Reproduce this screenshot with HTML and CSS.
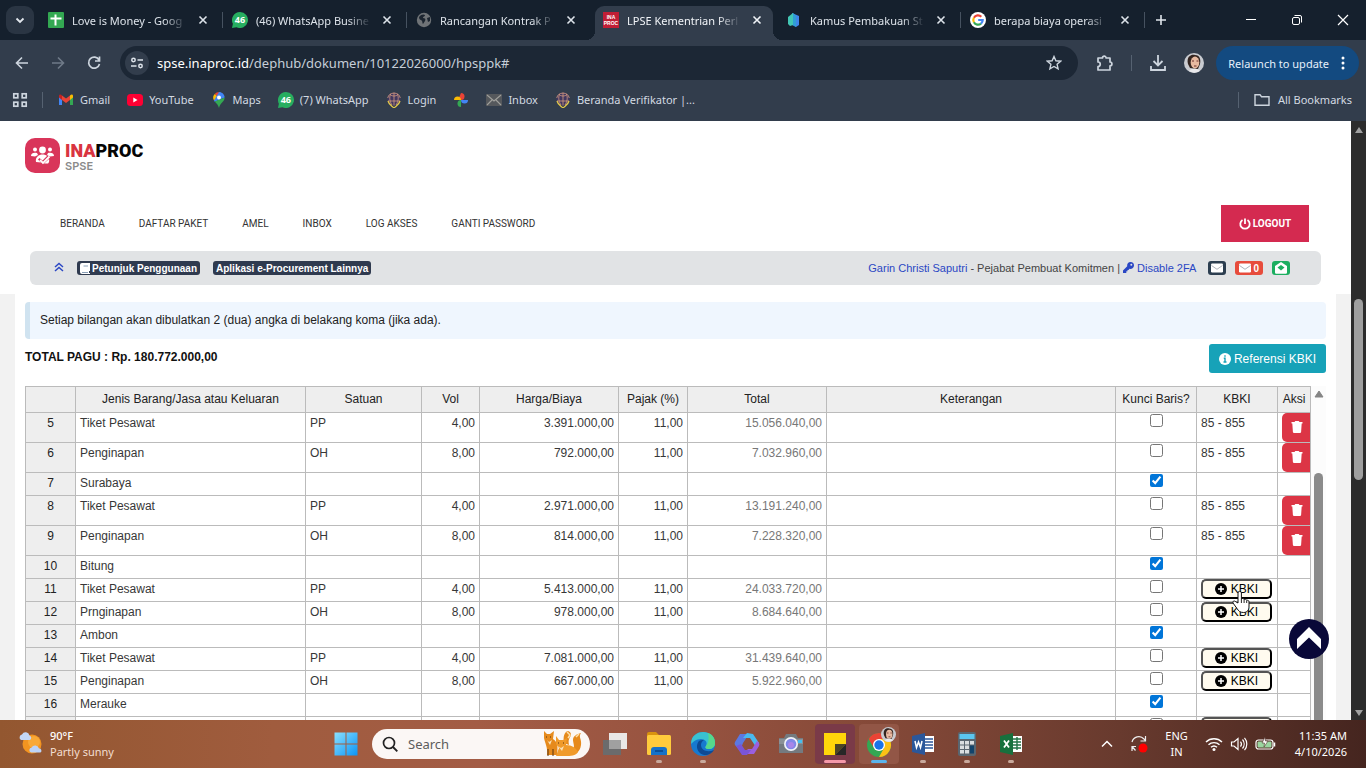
FILE: index.html
```html
<!DOCTYPE html>
<html lang="id">
<head>
<meta charset="utf-8">
<title>LPSE Kementrian Perhubungan</title>
<link rel="stylesheet" href="styles.css">
</head>
<body>
<svg class="sprite" aria-hidden="true">
  <symbol id="x" viewBox="0 0 16 16"><path d="M4.5 4.5l7 7M11.5 4.5l-7 7" stroke="currentColor" stroke-width="1.6" fill="none"/></symbol>
  <symbol id="wa" viewBox="0 0 16 16"><path d="M8 0a8 8 0 1 1-3.5 15.2L0 16l.9-4.2A8 8 0 0 1 8 0z" fill="#27ae60"/></symbol>
  <symbol id="trash" viewBox="0 0 12 14"><path d="M.5 2h3l.8-1h3.400l.8 1h3v1.500H.500zM1.300 3.300h9.400l-.6 8.600a1.200 1.200 0 0 1-1.200 1.100H3.100a1.200 1.200 0 0 1-1.200-1.100z" fill="#fff"/></symbol>
  <symbol id="plus" viewBox="0 0 12 12"><circle cx="6" cy="6" r="6" fill="#000"/><path d="M6 3v6M3 6h6" stroke="#fff" stroke-width="1.500"/></symbol>
  <symbol id="mail" viewBox="0 0 12 10"><rect y=".5" width="12" height="9" rx="1.200" fill="#fff"/><path d="M.5 2.500L6 6.300l5.500-3.800" stroke="#9aa0a8" stroke-width=".8" fill="none"/></symbol>
  <symbol id="emblem" viewBox="0 0 16 16"><circle cx="8" cy="7" r="6.600" fill="#413760"/><path d="M1.700 6a6.500 6.500 0 0 1 12.600 0M8 .6v13M2 9h12M4 2.500c2 2 6 2 8 0M4.500 2C3 6 4 10 6 13M11.500 2c1.500 4 .5 8-1.500 11" stroke="#d39a7f" stroke-width=".8" fill="none"/><path d="M2 9c1 4 4 5 6 7 2-2 5-3 6-7" stroke="#e3c94a" stroke-width="1.300" fill="none"/></symbol>
  <symbol id="face" viewBox="0 0 20 20"><circle cx="10" cy="10" r="10" fill="#c9cbd0"/><path d="M4 11C2 3 8 1 11 2c5 0 6 5 5 9l-2 5-8-1z" fill="#33241f"/><ellipse cx="11" cy="9.500" rx="4.300" ry="6" fill="#e7b9a0"/><path d="M8 8h2M12.500 8h2M10 13h2.500" stroke="#6b2f2a" stroke-width="1"/><path d="M5 18c2-3 9-3 11 0a10 10 0 0 1-11 0z" fill="#e9e9ec"/></symbol>
</svg>

<header class="browser">
  <div class="tabstrip">
    <button class="tab-search" aria-label="Cari tab"><svg width="12" height="12" viewBox="0 0 12 12"><path d="M2.500 4.500L6 8l3.500-3.500" stroke="#e3e8ee" stroke-width="1.800" fill="none"/></svg></button>
    <div class="tab">
      <svg class="fav" viewBox="0 0 16 16"><rect width="16" height="16" rx="1" fill="#33a852"/><path d="M7.500 2.500v11M2.500 6.500h11" stroke="#fff" stroke-width="2"/></svg>
      <span class="tab-title">Love is Money - Goog</span><button class="close" aria-label="Tutup"><svg><use href="#x"/></svg></button>
    </div>
    <div class="tab split">
      <span class="wa-icon"><svg class="fav"><use href="#wa"/></svg><b>46</b></span>
      <span class="tab-title">(46) WhatsApp Busine</span><button class="close" aria-label="Tutup"><svg><use href="#x"/></svg></button>
    </div>
    <div class="tab split">
      <svg class="fav" viewBox="0 0 16 16"><circle cx="8" cy="8" r="7.200" fill="#6f7377"/><path d="M3 5c2-3 5-3 6-2 0 2-2 1-2 3 2 0 3 1 2 3l-2 3c-1-1 0-3-2-4-1 0-2-1-2-3zM11 6l3-1v4l-2 1z" fill="#1c2530"/></svg>
      <span class="tab-title">Rancangan Kontrak P</span><button class="close" aria-label="Tutup"><svg><use href="#x"/></svg></button>
    </div>
    <div class="tab active">
      <span class="ina-icon">INA<br>PROC</span>
      <span class="tab-title">LPSE Kementrian Perl</span><button class="close" aria-label="Tutup"><svg><use href="#x"/></svg></button>
    </div>
    <div class="tab">
      <svg class="fav" viewBox="0 0 16 16"><path d="M6 1l7 3v9l-3 2-4-2z" fill="#3f86e8"/><path d="M2 5l5-4v12l-3 1-2-2z" fill="#42c6b4"/><path d="M7 1v12l3 2V4z" fill="#2f9fd4"/></svg>
      <span class="tab-title">Kamus Pembakuan St</span><button class="close" aria-label="Tutup"><svg><use href="#x"/></svg></button>
    </div>
    <div class="tab split">
      <svg class="fav" viewBox="0 0 16 16"><circle cx="8" cy="8" r="8" fill="#fff"/><g fill="none" stroke-width="2.200"><path d="M11.300 4.700A4.700 4.700 0 0 0 3.900 5.700" stroke="#ea4335"/><path d="M3.900 5.700a4.700 4.700 0 0 0 0 4.600" stroke="#fbbc05"/><path d="M3.900 10.300a4.700 4.700 0 0 0 7.100 1.300" stroke="#34a853"/><path d="M11 11.600A4.700 4.700 0 0 0 12.700 8H8.200" stroke="#4285f4"/></g></svg>
      <span class="tab-title">berapa biaya operasi</span><button class="close" aria-label="Tutup"><svg><use href="#x"/></svg></button>
    </div>
    <button class="new-tab split" aria-label="Tab baru"><svg width="12" height="12" viewBox="0 0 12 12"><path d="M6 1v10M1 6h10" stroke="#dfe5ec" stroke-width="1.600"/></svg></button>
    <div class="window-buttons">
      <button aria-label="Minimalkan"><svg width="12" height="12" viewBox="0 0 12 12"><path d="M1 5.500h10" stroke="#fff"/></svg></button>
      <button aria-label="Pulihkan"><svg width="12" height="12" viewBox="0 0 12 12"><rect x="1.500" y="3.500" width="7" height="7" rx="1.500" stroke="#fff" fill="none"/><path d="M3.500 1.500H9A1.500 1.500 0 0 1 10.500 3v5.500" stroke="#fff" fill="none"/></svg></button>
      <button aria-label="Tutup jendela"><svg width="12" height="12" viewBox="0 0 12 12"><path d="M1 1l10 10M11 1L1 11" stroke="#fff" stroke-width="1.200"/></svg></button>
    </div>
  </div>
  <div class="toolbar">
    <button class="nav-btn" aria-label="Kembali"><svg width="16" height="16" viewBox="0 0 16 16"><path d="M14 8H3M8 2.500L2.500 8 8 13.500" stroke="#cdd5de" stroke-width="1.600" fill="none"/></svg></button>
    <button class="nav-btn" aria-label="Maju"><svg width="16" height="16" viewBox="0 0 16 16"><path d="M2 8h11M8 2.500L13.500 8 8 13.500" stroke="#6f7a88" stroke-width="1.600" fill="none"/></svg></button>
    <button class="nav-btn" aria-label="Muat ulang"><svg width="16" height="16" viewBox="0 0 16 16"><path d="M13 5a5.500 5.500 0 1 0 .5 4M13.500 1.500V6H9" stroke="#cdd5de" stroke-width="1.700" fill="none"/></svg></button>
    <div class="omnibox">
      <button class="site-info" aria-label="Info situs"><svg width="14" height="14" viewBox="0 0 14 14"><g stroke="#dde3ea" stroke-width="1.500" fill="none"><circle cx="3.500" cy="4" r="1.700"/><path d="M7.500 4H13M1 10h5.500"/><circle cx="10.500" cy="10" r="1.700"/></g></svg></button>
      <span class="url"><b>spse.inaproc.id</b>/dephub/dokumen/10122026000/hpsppk#</span>
      <button class="nav-btn" aria-label="Bookmark"><svg width="16" height="16" viewBox="0 0 16 16"><path d="M8 1.500l1.900 4.300 4.700.4-3.500 3.100 1 4.600L8 11.500l-4.100 2.400 1-4.600L1.400 6.200l4.700-.4z" stroke="#cdd5de" stroke-width="1.400" fill="none"/></svg></button>
    </div>
    <button class="nav-btn ext" aria-label="Ekstensi"><svg width="18" height="18" viewBox="0 0 18 18"><path d="M2 4h4.500a1.800 1.800 0 0 1 3.600 0H14v4a1.900 1.900 0 0 1 0 3.800V16H2v-3.500c3 0 3-4.500 0-4.500z" stroke="#cdd5de" stroke-width="1.700" stroke-linejoin="round" fill="none"/></svg></button>
    <span class="bar"></span>
    <button class="nav-btn" aria-label="Unduhan"><svg width="18" height="18" viewBox="0 0 18 18"><path d="M9 1v10M4.500 7L9 11.500 13.500 7M2 12v4h14v-4" stroke="#cdd5de" stroke-width="1.800" fill="none"/></svg></button>
    <button class="nav-btn avatar" aria-label="Profil"><svg width="20" height="20"><use href="#face"/></svg></button>
    <button class="relaunch">Relaunch to update<svg width="4" height="16" viewBox="0 0 4 16"><g fill="#fff"><circle cx="2" cy="3" r="1.500"/><circle cx="2" cy="8" r="1.500"/><circle cx="2" cy="13" r="1.500"/></g></svg></button>
  </div>
  <nav class="bookmarks">
    <button class="apps" aria-label="Aplikasi"><svg width="16" height="16" viewBox="0 0 16 16"><g stroke="#cdd5de" stroke-width="1.700" fill="none"><rect x="1.800" y="1.800" width="4" height="4"/><rect x="10.200" y="1.800" width="4" height="4"/><rect x="1.800" y="10.200" width="4" height="4"/><rect x="10.200" y="10.200" width="4" height="4"/></g></svg></button>
    <span class="bar"></span>
    <a href="#"><svg class="fav" viewBox="0 0 16 16"><path d="M1 4v9h3V7z" fill="#4285f4"/><path d="M12 7v6h3V4z" fill="#34a853"/><path d="M4 3.500V8l4 3 4-3V3.500L8 6.500z" fill="#ea4335"/><path d="M1 4c0-1.500 1.600-2 3-.5V8L1 5.500z" fill="#c5221f"/><path d="M15 4c0-1.500-1.600-2-3-.5V8l3-2.500z" fill="#fbbc04"/></svg>Gmail</a>
    <a href="#"><svg class="fav" viewBox="0 0 16 16"><rect y="2" width="16" height="12" rx="3.500" fill="#f03"/><path d="M6.300 5.500v5l4.200-2.500z" fill="#fff"/></svg>YouTube</a>
    <a href="#" class="maps"><svg class="fav" viewBox="0 0 16 16"><path d="M8 0a5.600 5.600 0 0 0-4.300 2L7 5z" fill="#ea4335"/><path d="M3.700 2A5.500 5.500 0 0 0 3 8.500L7 5z" fill="#fbbc04"/><path d="M8 0c3 0 5.600 2.400 5.600 5.600L3.700 9.700 3 8.500z" fill="#4285f4"/><path d="M13.600 5.600C13.600 10 9.500 10.500 8 16c-.8-3-2.500-4.600-4.300-6.500z" fill="#34a853"/><circle cx="8" cy="5.500" r="2" fill="#fff"/></svg>Maps</a>
    <a href="#"><span class="wa-icon"><svg class="fav"><use href="#wa"/></svg><b>46</b></span>(7) WhatsApp</a>
    <a href="#"><svg class="fav"><use href="#emblem"/></svg>Login</a>
    <a href="#" aria-label="Foto"><svg class="fav" viewBox="0 0 16 16"><path d="M8 1a3.500 3.500 0 0 1 0 7z" fill="#ea4335"/><path d="M8 1v7H5z" fill="#ea4335"/><path d="M15 8a3.500 3.500 0 0 1-7 0z" fill="#4285f4"/><path d="M8 15a3.500 3.500 0 0 1 0-7z" fill="#34a853"/><path d="M1 8a3.500 3.500 0 0 1 7 0z" fill="#fbbc04"/></svg></a>
    <a href="#"><svg class="fav" viewBox="0 0 16 16"><rect y="2" width="16" height="12" fill="#55585c"/><path d="M1 3l7 6 7-6M1 13l5-5M15 13l-5-5" stroke="#a0a09c" stroke-width="1.100" fill="none"/></svg>Inbox</a>
    <a href="#"><svg class="fav"><use href="#emblem"/></svg>Beranda Verifikator |...</a>
    <span class="bar push"></span>
    <a href="#" class="all"><svg class="fav" viewBox="0 0 16 16"><path d="M1 2.700h5l1.500 2H15v8.600H1z" stroke="#cdd5de" stroke-width="1.400" fill="none"/></svg>All Bookmarks</a>
  </nav>
</header>

<div class="viewport">
  <main class="page">
    <div class="masthead">
      <a href="#" class="logo">
        <svg width="35" height="35" viewBox="0 0 35 35"><rect width="35" height="35" rx="10" fill="#d9355a"/><g fill="#fff"><circle cx="17.500" cy="12" r="3.400"/><circle cx="10" cy="11.500" r="2"/><circle cx="25" cy="11.500" r="2"/><path d="M6 18c0-3 3-3.800 6-3l1 2-3 1.500zM29 18c0-3-3-3.800-6-3l-1 2 3 1.500z"/><path d="M11 24c-1-5 3-7.500 6.500-7.500 2 0 3.500.5 4.500 1.500l-4.500 4.500-3-2.500-1.500 1.500 3 3z"/><path d="M15 22l3 3 6.500-6.500" stroke="#fff" stroke-width="1.800" fill="none"/><path d="M24 21c.5 2 0 4-1 4.500h-4z"/></g></svg>
        <span class="brand"><span class="name"><i>INA</i>PROC</span><span class="sub">SPSE</span></span>
      </a>
      <div class="menu-row">
        <nav class="menu"><a href="#">BERANDA</a><a href="#">DAFTAR PAKET</a><a href="#">AMEL</a><a href="#">INBOX</a><a href="#">LOG AKSES</a><a href="#">GANTI PASSWORD</a></nav>
        <button class="logout"><svg width="12" height="12" viewBox="0 0 12 12"><path d="M6 .5v5.500M3.500 2a4.700 4.700 0 1 0 5 0" stroke="#fff" stroke-width="1.800" fill="none"/></svg>LOGOUT</button>
      </div>
      <div class="infobar">
        <a href="#" class="chev" aria-label="Ciutkan"><svg width="10" height="10" viewBox="0 0 10 10"><path d="M1 5l4-3.500L9 5M1 9l4-3.500L9 9" stroke="#2b47c4" stroke-width="1.500" fill="none"/></svg></a>
        <a href="#" class="badge"><svg width="10" height="11" viewBox="0 0 10 11"><path d="M2 0h8v8H9v2h1v1H2a2 2 0 0 1-2-2V2a2 2 0 0 1 2-2z" fill="#fff"/><path d="M3.500 3h4.500M2 9.500h6" stroke="#8aa0b8" stroke-width="1"/></svg>Petunjuk Penggunaan</a>
        <a href="#" class="badge second">Aplikasi e-Procurement Lainnya</a>
        <span class="user"><a href="#">Garin Christi Saputri</a> - Pejabat Pembuat Komitmen | <a href="#"><svg width="11" height="11" viewBox="0 0 11 11"><path d="M7.500 0A3.500 3.500 0 0 1 11 3.500 3.500 3.500 0 0 1 6.500 6.800L5.500 8H4.500v1.200H3.300V11H0V8.500l4.200-4.200A3.500 3.500 0 0 1 7.500 0z" fill="#2b47c4"/><circle cx="8.300" cy="2.700" r="1" fill="#e1e3e5"/></svg> Disable 2FA</a></span>
        <a href="#" class="chip dark" aria-label="Pesan"><svg width="12" height="10"><use href="#mail"/></svg></a>
        <a href="#" class="chip red"><svg width="12" height="10"><use href="#mail"/></svg>0</a>
        <a href="#" class="chip green" aria-label="Pesan terbuka"><svg width="12" height="12" viewBox="0 0 12 12"><path d="M6 0l6 4v6.500a1.200 1.200 0 0 1-1.200 1.200H1.200A1.200 1.200 0 0 1 0 10.500V4z" fill="#fff"/><path d="M6 3l3.500 2.500L6 8.500 2.500 5.500z" fill="#1cae60"/></svg></a>
      </div>
    </div>
    <div class="body">
      <section class="card">
        <p class="note">Setiap bilangan akan dibulatkan 2 (dua) angka di belakang koma (jika ada).</p>
        <div class="total-row">
          <strong>TOTAL PAGU : Rp. 180.772.000,00</strong>
          <button class="ref"><svg width="12" height="12" viewBox="0 0 12 12"><circle cx="6" cy="6" r="6" fill="#fff"/><path d="M6 2.200v1.600M4.800 5.300H6v3.500M4.500 9h3" stroke="#17a2b8" stroke-width="1.400" fill="none"/></svg>Referensi KBKI</button>
        </div>
        <div class="sheet">
          <div class="grid-wrap">
          <table>
            <colgroup><col class="c-no"><col class="c-name"><col class="c-unit"><col class="c-vol"><col class="c-price"><col class="c-tax"><col class="c-total"><col class="c-note"><col class="c-lock"><col class="c-kbki"><col class="c-act"></colgroup>
            <thead><tr><th></th><th>Jenis Barang/Jasa atau Keluaran</th><th>Satuan</th><th>Vol</th><th>Harga/Biaya</th><th>Pajak (%)</th><th>Total</th><th>Keterangan</th><th>Kunci Baris?</th><th>KBKI</th><th>Aksi</th></tr></thead>
            <tbody>
            <tr class="tall"><th>5</th><td>Tiket Pesawat</td><td>PP</td><td class="n">4,00</td><td class="n">3.391.000,00</td><td class="n">11,00</td><td class="n t">15.056.040,00</td><td></td><td class="k"><input type="checkbox" aria-label="Kunci baris 5"></td><td>85 - 855</td><td><button class="del" aria-label="Hapus baris 5"><svg><use href="#trash"/></svg></button></td></tr>
            <tr class="tall"><th>6</th><td>Penginapan</td><td>OH</td><td class="n">8,00</td><td class="n">792.000,00</td><td class="n">11,00</td><td class="n t">7.032.960,00</td><td></td><td class="k"><input type="checkbox" aria-label="Kunci baris 6"></td><td>85 - 855</td><td><button class="del" aria-label="Hapus baris 6"><svg><use href="#trash"/></svg></button></td></tr>
            <tr><th>7</th><td>Surabaya</td><td></td><td></td><td></td><td></td><td></td><td></td><td class="k"><input type="checkbox" checked aria-label="Kunci baris 7"></td><td></td><td></td></tr>
            <tr class="tall"><th>8</th><td>Tiket Pesawat</td><td>PP</td><td class="n">4,00</td><td class="n">2.971.000,00</td><td class="n">11,00</td><td class="n t">13.191.240,00</td><td></td><td class="k"><input type="checkbox" aria-label="Kunci baris 8"></td><td>85 - 855</td><td><button class="del" aria-label="Hapus baris 8"><svg><use href="#trash"/></svg></button></td></tr>
            <tr class="tall"><th>9</th><td>Penginapan</td><td>OH</td><td class="n">8,00</td><td class="n">814.000,00</td><td class="n">11,00</td><td class="n t">7.228.320,00</td><td></td><td class="k"><input type="checkbox" aria-label="Kunci baris 9"></td><td>85 - 855</td><td><button class="del" aria-label="Hapus baris 9"><svg><use href="#trash"/></svg></button></td></tr>
            <tr><th>10</th><td>Bitung</td><td></td><td></td><td></td><td></td><td></td><td></td><td class="k"><input type="checkbox" checked aria-label="Kunci baris 10"></td><td></td><td></td></tr>
            <tr><th>11</th><td>Tiket Pesawat</td><td>PP</td><td class="n">4,00</td><td class="n">5.413.000,00</td><td class="n">11,00</td><td class="n t">24.033.720,00</td><td></td><td class="k"><input type="checkbox" aria-label="Kunci baris 11"></td><td><button class="kbki"><svg><use href="#plus"/></svg>KBKI</button></td><td></td></tr>
            <tr><th>12</th><td>Prnginapan</td><td>OH</td><td class="n">8,00</td><td class="n">978.000,00</td><td class="n">11,00</td><td class="n t">8.684.640,00</td><td></td><td class="k"><input type="checkbox" aria-label="Kunci baris 12"></td><td><button class="kbki"><svg><use href="#plus"/></svg>KBKI</button></td><td></td></tr>
            <tr><th>13</th><td>Ambon</td><td></td><td></td><td></td><td></td><td></td><td></td><td class="k"><input type="checkbox" checked aria-label="Kunci baris 13"></td><td></td><td></td></tr>
            <tr><th>14</th><td>Tiket Pesawat</td><td>PP</td><td class="n">4,00</td><td class="n">7.081.000,00</td><td class="n">11,00</td><td class="n t">31.439.640,00</td><td></td><td class="k"><input type="checkbox" aria-label="Kunci baris 14"></td><td><button class="kbki"><svg><use href="#plus"/></svg>KBKI</button></td><td></td></tr>
            <tr><th>15</th><td>Penginapan</td><td>OH</td><td class="n">8,00</td><td class="n">667.000,00</td><td class="n">11,00</td><td class="n t">5.922.960,00</td><td></td><td class="k"><input type="checkbox" aria-label="Kunci baris 15"></td><td><button class="kbki"><svg><use href="#plus"/></svg>KBKI</button></td><td></td></tr>
            <tr><th>16</th><td>Merauke</td><td></td><td></td><td></td><td></td><td></td><td></td><td class="k"><input type="checkbox" checked aria-label="Kunci baris 16"></td><td></td><td></td></tr>
            <tr><th></th><td></td><td></td><td></td><td></td><td></td><td></td><td></td><td class="k"><input type="checkbox" aria-label="Kunci baris"></td><td><button class="kbki" aria-label="Tambah"></button></td><td></td></tr>
            </tbody>
          </table>
          </div>
          <div class="inner-scroll"><svg width="10" height="8" viewBox="0 0 10 8"><path d="M5 1l4 6H1z" fill="#858585" stroke="#858585" stroke-linejoin="round"/></svg><span class="inner-thumb"></span></div>
        </div>
      </section>
    </div>
    <button class="to-top" aria-label="Ke atas"><svg width="40" height="40" viewBox="0 0 40 40"><path d="M20 8l12 12v10L20 18.500 8 30V20z" fill="#fff"/></svg></button>
    <svg class="cursor" width="20" height="24" viewBox="0 0 20 24"><path d="M7 13V3a1.700 1.700 0 0 1 3.400 0v6c.6-1 2.600-.6 2.700.6.800-.8 2.500-.3 2.600.9.800-.6 2.300-.1 2.300 1.300V16c0 4-1.500 6.500-5.500 6.500-3.500 0-5-1.500-6.500-4L2 13c-.8-1.500 1-2.700 2.200-1.600z" fill="#fff" stroke="#111" stroke-width="1"/><path d="M10.400 9v4M13.100 10v3M15.700 11v2" stroke="#111" stroke-width=".9"/></svg>
  </main>
  <div class="outer-scroll">
    <svg width="10" height="8" viewBox="0 0 10 8"><path d="M5 1l4 6H1z" fill="#a0a0a0"/></svg>
    <span class="outer-thumb"></span>
    <svg width="10" height="8" viewBox="0 0 10 8"><path d="M5 7l4-6H1z" fill="#a0a0a0"/></svg>
  </div>
</div>

<footer class="taskbar">
  <div class="weather">
    <svg width="26" height="26" viewBox="0 0 26 26"><circle cx="14" cy="13" r="9.500" fill="#f39420"/><circle cx="16" cy="11" r="6" fill="#f9a938"/><path d="M3 9a3 3 0 0 1 1-5.500 4 4 0 0 1 7.500 1A2.500 2.500 0 0 1 12 9z" fill="#c3d8f7"/><path d="M13 21.500a2.600 2.600 0 0 1 .6-5 4 4 0 0 1 7.400 1 2.200 2.200 0 0 1 1.500 4z" fill="#bcd3f8"/></svg>
    <span><b>90°F</b><br>Partly sunny</span>
  </div>
  <div class="dock">
    <button class="app" aria-label="Start"><svg width="24" height="24" viewBox="0 0 24 24"><defs><linearGradient id="w" x2="1" y2="1"><stop stop-color="#8be0ff"/><stop offset="1" stop-color="#0a94f5"/></linearGradient></defs><path d="M.5.500h11v11H.500zM12.500.500h11v11h-11zM.500 12.500h11v11H.500zM12.500 12.500h11v11h-11z" fill="url(#w)"/></svg></button>
    <label class="search"><svg width="16" height="16" viewBox="0 0 16 16"><circle cx="7" cy="7" r="5.500" stroke="#222" stroke-width="1.700" fill="none"/><path d="M11 11l4.300 4.300" stroke="#222" stroke-width="1.900"/></svg><input type="text" placeholder="Search" aria-label="Search">
      <svg width="42" height="28" viewBox="0 0 42 28"><g fill="#e68a1c"><path d="M2 1l3 3h3l4-3-1 8c5 3 5 8 4 16H5C6 18 3 13 2 8z"/><path d="M22 13c-1-6 0-11 4-12 3 1 4 4 2 6-1 2-2 4-1 8z"/><path d="M27 22c8-1 4-9 4-12 0-4 4-6 8-7-3 4 1 6 0 12-1 7-5 10-14 10z"/></g><path d="M14 6l3 4h4l4-2-1 7c6 0 10 3 12 7-2 4-8 4-12 4H14l3-8-3-4z" fill="#f09a2a"/><path d="M5 10l2 2 3-2-2 5zM16 16l3 2 3-2-2 5z" fill="#fbe0b4"/><path d="M4 7h1M8 7h1M16 13h1M21 13h1M6 19v7M11 19v7" stroke="#59320f" stroke-width="1"/><path d="M25 2l3 3-2 3M34 7l3-3" stroke="#ffe1aa" stroke-width="1.500" fill="none"/></svg></label>
    <button class="app" aria-label="Task view"><svg width="26" height="26" viewBox="0 0 26 26"><rect x="7" y="2" width="18" height="16" fill="#e9e7e6"/><rect x="1" y="9" width="18" height="15" fill="#6b6b6c"/><rect x="7" y="9" width="12" height="9" fill="#a0a0a0"/></svg></button>
    <button class="app run" aria-label="File Explorer"><svg width="26" height="26" viewBox="0 0 26 26"><path d="M1 3a2 2 0 0 1 2-2h7l3 3h-2v5H1z" fill="#d9920e"/><rect x="1" y="4" width="24" height="20" rx="1.500" fill="#ffcb3c"/><path d="M5 24v-5a3 3 0 0 1 3-3h10a3 3 0 0 1 3 3v5z" fill="#1672c8"/><path d="M9 20h8" stroke="#0b4f98" stroke-width="2"/></svg></button>
    <button class="app run" aria-label="Edge"><svg width="26" height="26" viewBox="0 0 26 26"><circle cx="13" cy="13" r="12" fill="#1779cf"/><path d="M1 13C1 4 8 1 13 1c8 0 12 5 12 11 0 4-3 6-6 6-4 0-4-2-3-3 2-4-1-7-5-7-5 0-8 3-10 5z" fill="#39c1d1"/><path d="M18 2c5 2 7 6 7 10 0 4-3 6-6 6-4 0-4-2-3-3 3-4 3-8 2-13z" fill="#56d98b"/><path d="M9 10c-5 6 0 15 8 14 3-1 5-2 7-5-7 3-13 0-13-5 0-2 1-4 3-5-2 0-4 0-5 1z" fill="#0d4a94"/></svg></button>
    <button class="app" aria-label="Microsoft 365"><svg width="26" height="26" viewBox="0 0 26 26"><path d="M6 3h9l-6 9-3 8-5-6a3 3 0 0 1 0-3z" fill="#5b78e2"/><path d="M13 2l6 1 6 9-3 4-6-9H9z" fill="#49b9ef"/><path d="M25 12a3 3 0 0 1 0 3l-5 8H9l5-5h4l5-8z" fill="#9a5fe0"/><path d="M2 15l5-2 4 6h6l-4 5H8z" fill="#7a55d6"/></svg></button>
    <button class="app" aria-label="Kamera"><svg width="26" height="26" viewBox="0 0 26 26"><path d="M1 7h5l2-4h10l2 4h5v15H1z" fill="#747a80"/><path d="M1 8h24v5H1z" fill="#8a9197"/><rect x="20" y="9" width="4" height="3" fill="#42bff1"/><circle cx="13" cy="13" r="7" fill="#f1f3f8"/><circle cx="13" cy="13" r="5.300" fill="#8289e8"/><circle cx="13" cy="14" r="3" fill="#a987e9"/></svg></button>
    <button class="app note-app" aria-label="Sticky Notes"><svg width="22" height="22" viewBox="0 0 22 22"><path d="M0 0h22v11L11 22H0z" fill="#ffd60a"/><path d="M11 22V11h11z" fill="#4b4526"/><path d="M11 22L22 11v11z" fill="#272727"/></svg></button>
    <button class="app chrome-app" aria-label="Chrome"><svg width="34" height="34" viewBox="0 0 34 34"><circle cx="17" cy="18" r="12" fill="#34a853"/><path d="M6.600 12A12 12 0 0 1 27.400 12H17l-5 9z" fill="#ea4335"/><path d="M27.400 12A12 12 0 0 1 17 30l5-9-5-9z" fill="#fbc116"/><circle cx="17" cy="18" r="6" fill="#fff"/><circle cx="17" cy="18" r="4.700" fill="#1a73e8"/><use href="#face" x="19" y="0" width="15" height="15"/></svg></button>
    <button class="app run" aria-label="Word"><svg width="24" height="22" viewBox="0 0 24 22"><rect x="11" y="3" width="12" height="16" fill="#fff"/><path d="M14 6h8M14 9h8M14 12h8M14 15h8" stroke="#2b579a" stroke-width="1.400"/><path d="M1 3l13-3v22L1 19z" fill="#2b579a"/><path d="M4 8l1.500 6.500L7.500 9l2 5.500L11 8" stroke="#fff" stroke-width="1.500" fill="none"/></svg></button>
    <button class="app run" aria-label="Kalkulator"><svg width="20" height="24" viewBox="0 0 20 24"><rect x="1" width="18" height="24" rx="2" fill="#5a6670"/><rect x="2.500" y="2" width="15" height="5" fill="#5bc5ef"/><g fill="#d9dde0"><path d="M3 9h4v3.500H3zM8 9h4v3.500H8zM13 9h4v3.500h-4zM3 13.500h4V17H3zM8 13.500h4V17H8zM3 18h4v3.500H3zM8 18h4v3.500H8z"/></g><path d="M13 13.500h4v8h-4z" fill="#12446c"/></svg></button>
    <button class="app run" aria-label="Excel"><svg width="24" height="22" viewBox="0 0 24 22"><rect x="11" y="3" width="12" height="16" fill="#fff"/><path d="M14 6h8M14 9h8M14 12h8M14 15h8M18 4v13" stroke="#217346" stroke-width="1.400"/><path d="M1 3l13-3v22L1 19z" fill="#17703d"/><path d="M5 7.500l5 7M10 7.500l-5 7" stroke="#fff" stroke-width="1.800"/></svg></button>
  </div>
  <div class="tray">
    <svg width="12" height="12" viewBox="0 0 12 12"><path d="M1 8.500l5-5 5 5" stroke="#fff" stroke-width="1.500" fill="none"/></svg>
    <svg class="sync" width="18" height="18" viewBox="0 0 18 18"><path d="M2 7a7 7 0 0 1 12-3l1.500 2M15.500 1v5h-5M2 16v-4.500h4M2.500 12l3 3.500" stroke="#eee" stroke-width="1.200" fill="none"/><circle cx="13" cy="13" r="4.500" fill="#f00"/></svg>
    <span class="lang">ENG<br>IN</span>
    <svg width="18" height="16" viewBox="0 0 18 16"><g stroke="#fff" stroke-width="1.400" fill="none"><path d="M1 6a11.500 11.500 0 0 1 16 0M3.500 8.800a8 8 0 0 1 11 0M6 11.300a4.500 4.500 0 0 1 6 0"/></g><circle cx="9" cy="13.500" r="1.500" fill="#fff"/></svg>
    <svg class="speaker" width="18" height="16" viewBox="0 0 18 16"><g stroke="#fff" stroke-width="1.200" fill="none"><path d="M1.500 6H4l4-3.500v11L4 10H1.500zM10.500 5.500a4 4 0 0 1 0 5M12.500 3.500a7 7 0 0 1 0 9M14.500 1.800a9.500 9.500 0 0 1 0 12.400"/></g></svg>
    <svg width="21" height="16" viewBox="0 0 21 16"><rect x="1" y="4" width="17" height="9" rx="2.500" stroke="#fff" stroke-width="1.200" fill="none"/><rect x="2.500" y="5.500" width="14" height="6" rx="1" fill="#9bd6a0"/><path d="M19.500 6.500v4" stroke="#fff" stroke-width="1.500"/><path d="M10 1L7 7h2.500L9 11l4-6h-2.500z" fill="#fff" stroke="#4d2d27" stroke-width=".6"/></svg>
    <span class="clock">11:35 AM<br>4/10/2026</span>
  </div>
</footer>
</body>
</html>
```

FILE: styles.css
```css
* { box-sizing: border-box; }
body {
  margin: 0;
  height: 100vh;
  display: flex;
  flex-direction: column;
  overflow: hidden;
  font-family: "Liberation Sans", Arial, sans-serif;
  font-size: 12px;
  color: #333;
}
button { font: inherit; border: 0; padding: 0; background: none; color: inherit; }
a { color: inherit; text-decoration: none; }
svg { flex: none; }
.sprite { position: absolute; width: 0; height: 0; }

/* Browser chrome */
.browser { flex: none; background: #323d4c; color: #dde3ea; font-family: "Noto Sans", "Open Sans", sans-serif; font-size: 11px; }
.tabstrip { display: flex; align-items: center; height: 40px; background: #15202d; padding-left: 6px; }
.tab-search { width: 28px; height: 28px; margin-right: 4px; border-radius: 9px; background: #2a3543; display: grid; place-items: center; }
.tab { position: relative; width: 184px; height: 34px; align-self: flex-end; display: flex; align-items: center; gap: 8px; padding: 0 11px 6px 10px; }
.split::before { content: ""; position: absolute; left: 0; top: 6px; width: 1px; height: 16px; background: #465260; }
.tab.active { background: #323d4c; border-radius: 9px 9px 0 0; width: 178px; margin: 0 3px 0 5px; padding-left: 8px; padding-right: 8px; color: #f1f4f8; }
.tab.active::before, .tab.active::after { content: ""; position: absolute; bottom: 0; width: 9px; height: 9px; }
.tab.active::before { right: 100%; background: radial-gradient(circle at 0 0, transparent 9px, #323d4c 9px); }
.tab.active::after { left: 100%; background: radial-gradient(circle at 100% 0, transparent 9px, #323d4c 9px); }
.fav { width: 16px; height: 16px; display: block; }
.tab-title { flex: 1; min-width: 0; overflow: hidden; white-space: nowrap; mask-image: linear-gradient(90deg, #000 80%, transparent); }
.close, .close svg { width: 16px; height: 16px; display: block; }
.wa-icon { position: relative; }
.wa-icon b { position: absolute; inset: 0; text-align: center; font: bold 9px/15px "Open Sans", sans-serif; color: #fff; }
.ina-icon { width: 16px; height: 16px; background: #c01e35; color: #fff; font: bold 5px/6px "Liberation Sans", sans-serif; padding: 2px 0 0; text-align: center; }
.new-tab { position: relative; width: 34px; height: 28px; display: grid; place-items: center; }
.window-buttons { margin-left: auto; display: flex; }
.window-buttons button { width: 46px; height: 40px; display: grid; place-items: center; }

.toolbar { display: flex; align-items: center; height: 42px; padding: 0 7px 0 4px; margin-top: 2px; }
.nav-btn { width: 36px; height: 34px; display: grid; place-items: center; }
.omnibox { flex: 1; display: flex; align-items: center; height: 34px; margin: 0 9px 0 8px; padding: 0 6px 0 5px; border-radius: 17px; background: #1c2735; font-size: 13px; }
.site-info { width: 24px; height: 24px; border-radius: 12px; background: #323d4c; display: grid; place-items: center; margin-right: 8px; }
.url { flex: 1; color: #c6ced8; }
.url b { font-weight: normal; color: #fff; }
.bar { width: 1px; height: 16px; background: #566271; }
.toolbar .bar { margin: 0 8px; }
.relaunch { height: 34px; border-radius: 17px; padding: 0 14px 0 12px; background: #134a80; color: #e6f0fb; display: flex; align-items: center; gap: 12px; margin-left: 4px; }

.bookmarks { display: flex; align-items: center; height: 37px; padding: 0 14px 6px 12px; }
.bookmarks a { display: flex; align-items: center; gap: 6px; margin-right: 17px; color: #d3dae2; }
.bookmarks .apps { display: grid; margin-right: 14px; }
.bookmarks .bar { margin-right: 15px; }
.bookmarks .push { margin-left: auto; }
.bookmarks .all { margin-right: 0; gap: 8px; }

/* Web page */
.viewport { flex: 1; min-height: 0; display: flex; }
.page { position: relative; flex: 1; min-width: 0; display: flex; flex-direction: column; overflow: hidden; background: #fff; }
.masthead { height: 173px; flex: none; padding: 17px 30px 0 25px; }
.logo { display: flex; gap: 5px; height: 35px; }
.brand { display: flex; flex-direction: column; padding-top: 2px; }
.name { font: 900 18px/21px Roboto, sans-serif; color: #050505; }
.name i { font-style: normal; color: #d93440; }
.sub { font: 600 11px/10px Inter, sans-serif; color: #8b8b8b; }
.menu-row { display: flex; align-items: center; justify-content: space-between; margin: 32px 12px 9px 35px; }
.menu { display: flex; gap: 34px; font: 10px/16px Roboto, sans-serif; }
.logout { display: flex; align-items: center; justify-content: center; gap: 2px; width: 88px; height: 37px; background: #d42a50; color: #fff; font: bold 10px Roboto, sans-serif; }
.infobar { display: flex; align-items: center; height: 34px; margin-left: 5px; padding: 0 31px 0 24px; background: #e1e3e5; border-radius: 6px; font-size: 11px; color: #444; white-space: nowrap; }
.infobar > .chev { margin-right: 13px; display: block; }
.badge { display: flex; align-items: center; gap: 2px; height: 14px; padding: 0 3px; border-radius: 3px; background: #2f3a4f; color: #fff; font-size: 10px; font-weight: bold; }
.badge.second { margin-left: 13px; }
.user { margin-left: auto; margin-right: 12px; }
.user a { color: #2b47c4; }
.user svg { vertical-align: -1px; }
.chip { display: flex; align-items: center; gap: 2px; height: 14px; padding: 0 3px; border-radius: 3px; color: #fff; font-weight: bold; font-size: 10px; }
.dark { background: #2c3e50; }
.red { background: #e74c3c; margin: 0 9px; padding: 0 4px; }
.green { background: #1cae60; }
.body { flex: 1; min-height: 0; display: flex; background: #f2f2f2; padding: 0 15px; }
.card { flex: 1; min-width: 0; background: #fff; padding: 8px 10px 0; overflow: hidden; }
.note { margin: 0 0 5px; padding: 10px; line-height: 17px; border-left: 5px solid #d0e3f0; border-radius: 4px; background: #eff6fe; color: #222; }
.total-row { display: flex; justify-content: space-between; height: 42px; color: #111; }
.total-row strong { line-height: 26px; }
.ref { height: 29px; padding: 0 10px; border-radius: 3px; background: #17a2b8; color: #fff; display: flex; align-items: center; gap: 3px; }
.sheet { display: flex; }
.grid-wrap { flex: 1; min-width: 0; overflow: hidden; }
table { width: 100%; table-layout: fixed; border-collapse: collapse; }
.c-no { width: 50px; } .c-name { width: 230px; } .c-unit { width: 116px; } .c-vol { width: 58px; }
.c-price, .c-total { width: 139px; } .c-tax { width: 69px; } .c-lock, .c-kbki { width: 81px; } .c-act { width: 33px; }
th, td { height: 23px; padding: 0 4px; border: 1px solid #bbb; font-weight: normal; line-height: 20px; vertical-align: top; white-space: nowrap; }
th { background: #eee; color: #222; text-align: center; }
td { text-align: left; overflow: hidden; color: #373737; }
thead th { height: 26px; line-height: 24px; }
.tall > * { height: 30px; }
.n { text-align: right; }
.t { color: #777; }
.k { text-align: center; line-height: 0; }
.k input { margin: 1px 0 0; width: 13px; height: 13px; accent-color: #0075d8; }
.del { display: flex; align-items: center; width: 40px; height: 29px; padding: 0 0 1px 9px; border-radius: 5px; background: #dc3545; }
.del svg { width: 12px; height: 14px; }
.kbki { display: flex; align-items: center; justify-content: center; gap: 4px; width: 71px; height: 20px; border: 2px outset #000; border-radius: 5px; background: #fffbef; color: #000; }
.kbki svg { width: 12px; height: 12px; }
.inner-scroll { width: 15px; display: flex; flex-direction: column; align-items: center; padding-top: 4px; background: #fcfcfc; }
.inner-thumb { width: 9px; flex: 1; margin-top: 75px; border-radius: 5px 5px 0 0; background: #8b8b8b; }
.to-top { position: absolute; right: 22px; bottom: 61px; width: 40px; height: 40px; border-radius: 50%; background: #090838; }
.cursor { position: absolute; right: 100px; bottom: 106px; }
.outer-scroll { width: 15px; background: #2c2c2c; display: flex; flex-direction: column; align-items: center; padding: 5px 0 3px; }
.outer-thumb { width: 9px; height: 181px; margin: 165px 0 auto; border-radius: 5px; background: #9f9f9f; }

/* Taskbar */
.taskbar { flex: none; height: 48px; display: grid; grid-template-columns: 1fr auto 1fr; align-items: center; padding-right: 9px; color: #fff; font: 11px/16px "Noto Sans", sans-serif; background: linear-gradient(90deg, #935730 0%, #a05c3e 20%, #a35c45 35%, #975340 50%, #7f4636 68%, #683a2e 82%, #45251f 100%); }
.weather { display: flex; align-items: center; gap: 6px; padding-left: 18px; color: #f3dfd2; }
.weather b { font-weight: 500; color: #fff; }
.dock { display: flex; align-items: center; height: 48px; }
.app { position: relative; width: 44px; height: 48px; display: grid; place-items: center; }
.run::after, .note-app::after, .chrome-app::after { content: ""; position: absolute; bottom: 5px; left: 19px; width: 6px; height: 3px; border-radius: 2px; background: #c9a99c; }
.note-app, .chrome-app { width: 40px; height: 40px; margin: 0 2px; border-radius: 4px; }
.note-app { background: #7a3a48; }
.chrome-app { background: #925646; }
.note-app::after { bottom: 1px; left: 9px; width: 22px; background: #f598a8; }
.chrome-app::after { bottom: 1px; left: 12px; width: 16px; background: #5ab4ec; }
.search { display: flex; align-items: center; width: 218px; height: 30px; margin: 0 3px 0 4px; padding: 0 6px 0 10px; border-radius: 15px; background: #fbf7f5; }
.search input { flex: 1; min-width: 0; border: 0; outline: 0; background: none; font: 13px "Noto Sans", sans-serif; padding: 0 0 0 10px; }
.search input::placeholder { color: #5c5c5c; opacity: 1; }
.tray { display: flex; align-items: center; justify-content: flex-end; padding-right: 10px; }
.sync { margin: 0 17px; }
.lang { text-align: center; margin-right: 17px; }
.speaker { margin: 0 7px; }
.clock { text-align: right; margin-left: 19px; }
```
